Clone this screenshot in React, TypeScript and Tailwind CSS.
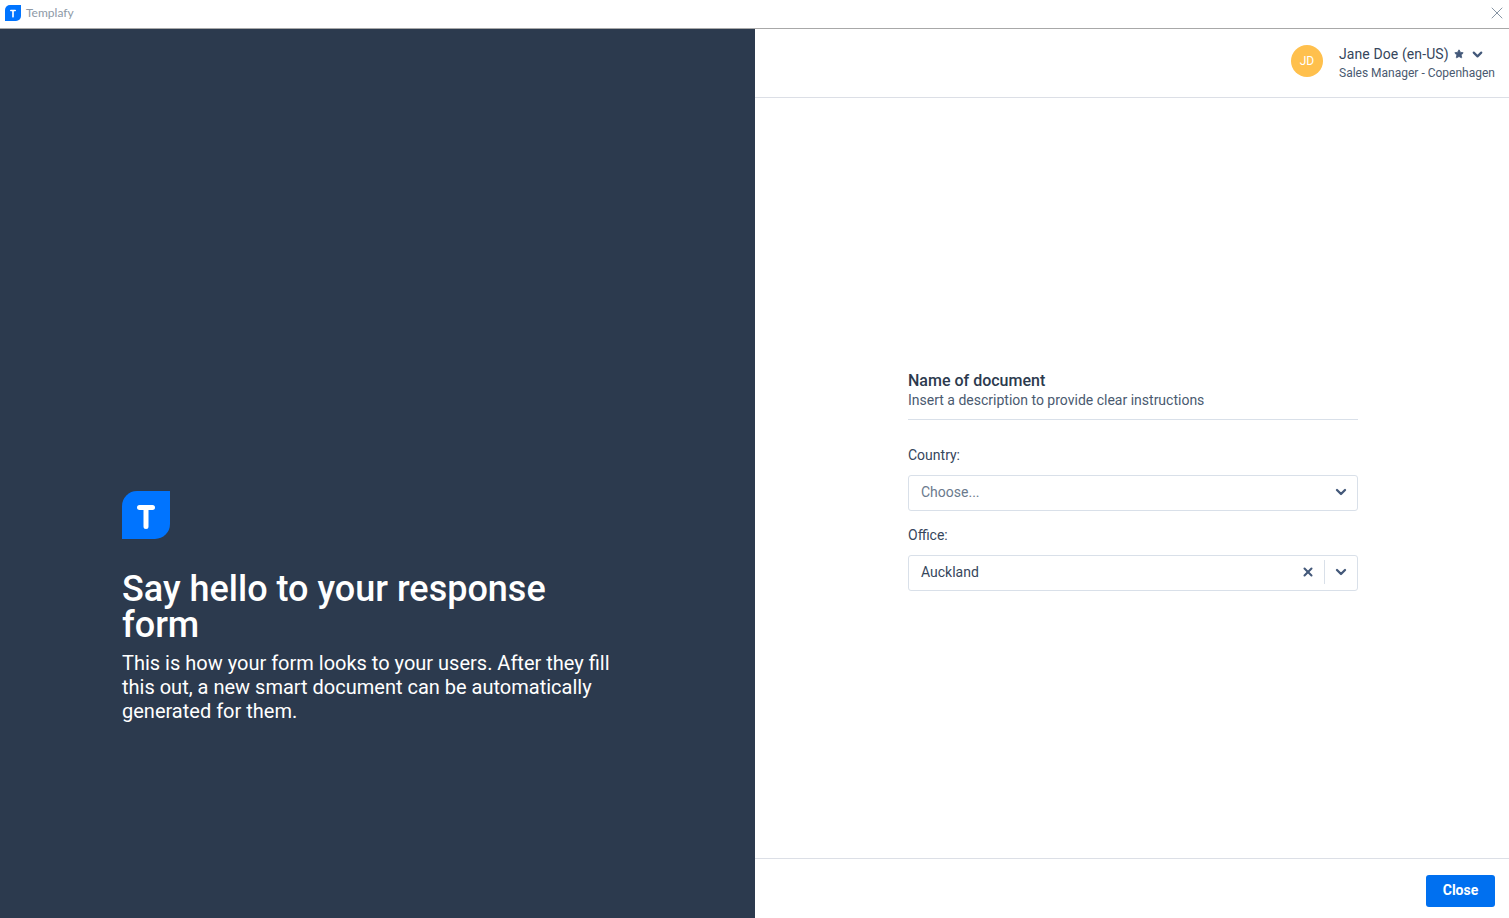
import { ChevronDown, Star, X } from 'lucide-react';

const roboto = 'font-[Roboto,sans-serif]';

// Templafy mark: rounded on three corners, square top right and bottom left
const Logo: React.FC<{ size: number }> = ({ size }) => (
  <svg width={size} height={size} viewBox="0 0 48 48" className="shrink-0">
    <path d="M15 0H48V33A15 15 0 0 1 33 48H0V15A15 15 0 0 1 15 0Z" fill="#0074ff" />
    <path d="M17.5 16.5H30.5M24 16.5V35.5" stroke="#fff" strokeWidth="5" strokeLinecap="round" fill="none" />
  </svg>
);

const SelectField: React.FC<{ label: string; value: string; placeholder?: boolean; clearable?: boolean }> = ({
  label,
  value,
  placeholder,
  clearable,
}) => (
  <div>
    <label className="block text-[14px] leading-[20px] text-[#36465c]">{label}</label>
    <div className="mt-[10px] flex h-[36px] items-center rounded-[3px] border border-[#d9e0e9] bg-white pb-[2px] pl-[12px] pr-[8px]">
      <span className={`flex-1 text-[14px] ${placeholder ? 'text-[#6b7a8d]' : 'text-[#36465c]'}`}>{value}</span>
      {clearable && (
        <>
          <X size={14} strokeWidth={3.5} className="text-[#44597a]" />
          <span className="ml-[9px] mr-[8px] h-[24px] w-px bg-[#d9e0e9]" />
        </>
      )}
      <ChevronDown size={16} strokeWidth={3.5} className="text-[#44597a]" />
    </div>
  </div>
);

export default function App() {
  return (
    <div className={`flex h-[918px] w-[1509px] flex-col overflow-hidden bg-white ${roboto}`}>
      {/* Window title bar */}
      <div className="flex h-[29px] shrink-0 items-center border-b border-[#a8a8a8] pb-[3px] pl-[5px] pr-[2px]">
        <Logo size={16} />
        <span className="ml-[5px] flex-1 font-['Lato',sans-serif] text-[12px] text-[#8d99a6]">Templafy</span>
        <X size={20} strokeWidth={1} className="text-[#6f7f92]" />
      </div>

      <div className="flex min-h-0 flex-1">
        {/* Left panel */}
        <div className="flex w-[755px] shrink-0 flex-col bg-[#2c3a4e] pl-[122px] pt-[462px]">
          <Logo size={48} />
          <h1 className="mt-[32px] w-[480px] text-[36px] font-medium leading-[36px] text-white">
            Say hello to your response form
          </h1>
          <p className="mt-[8px] w-[500px] text-[20px] leading-[24px] text-white">
            This is how your form looks to your users. After they fill this out, a new smart document can be
            automatically generated for them.
          </p>
        </div>

        {/* Right panel */}
        <div className="flex min-w-0 flex-1 flex-col">
          <header className="flex h-[69px] shrink-0 items-start justify-end border-b border-[#dcdfe6] pr-[14px] pt-[16px]">
            <div className="flex h-[32px] w-[32px] items-center justify-center rounded-full bg-[#ffc04d] text-[12px] text-white">
              JD
            </div>
            <div className="ml-[16px] w-[156px]">
              <div className="flex items-center text-[14px] leading-[18px] tracking-[0.1px] text-[#36465c]">
                Jane Doe (en-US)
                <Star size={10} fill="currentColor" className="ml-[5px] text-[#44597a]" />
                <ChevronDown size={15} strokeWidth={3.5} className="ml-[6px] text-[#44597a]" />
              </div>
              <div className="mt-[2px] whitespace-nowrap text-[12px] leading-[16px] text-[#4a5a70]">
                Sales Manager - Copenhagen
              </div>
            </div>
          </header>

          <main className="flex min-h-0 flex-1 flex-col pl-[153px] pt-[273px]">
            <div className="w-[450px]">
              <div className="border-b border-[#d9e0e9] pb-[9px]">
                <h2 className="text-[16px] font-medium leading-[19px] text-[#2c3a4e]">Name of document</h2>
                <p className="text-[14px] leading-[20px] text-[#4a5a70]">Insert a description to provide clear instructions</p>
              </div>
              <div className="mt-[25px] flex flex-col gap-[14px]">
                <SelectField label="Country:" value="Choose..." placeholder />
                <SelectField label="Office:" value="Auckland" clearable />
              </div>
            </div>
          </main>

          <footer className="flex h-[60px] shrink-0 items-center justify-end border-t border-[#dcdfe6] pr-[14px] pt-[4px]">
            <button className="h-[32px] w-[69px] rounded-[3px] bg-[#0070f0] text-[14px] font-bold text-white">Close</button>
          </footer>
        </div>
      </div>
    </div>
  );
}
